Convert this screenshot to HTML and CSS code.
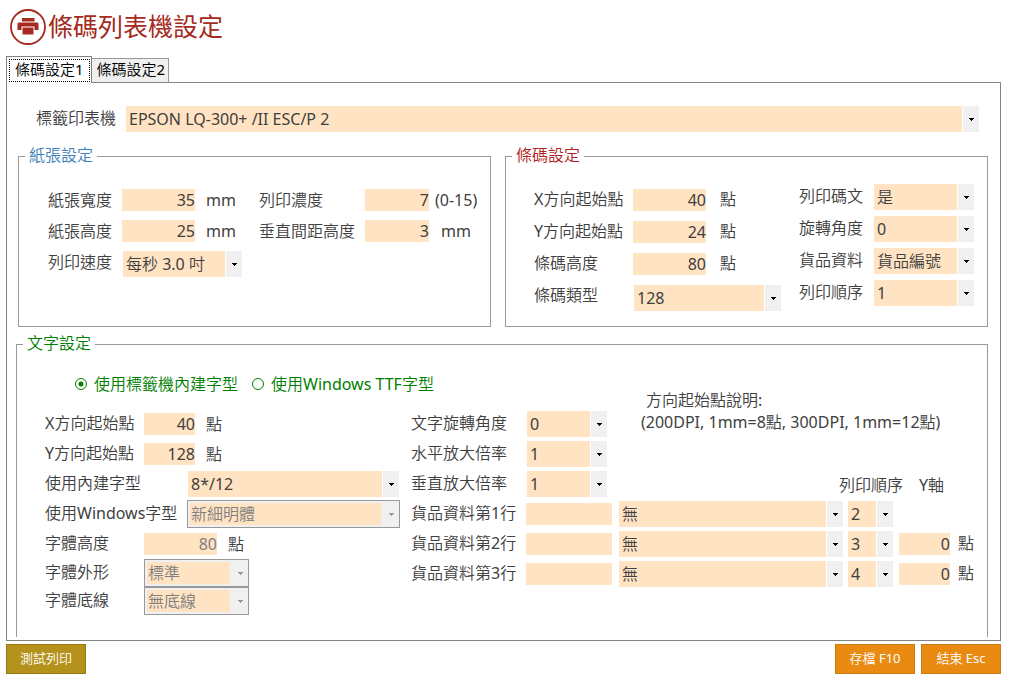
FILE: index.html
```html
<!DOCTYPE html>
<html lang="zh-Hant">
<head>
<meta charset="utf-8">
<title>條碼列表機設定</title>
<link rel="stylesheet" href="styles.css">
</head>
<body>
<header class="header">
  <svg class="logo" viewBox="0 0 36 36" aria-hidden="true">
    <circle cx="18" cy="18" r="17" fill="none" stroke="#a52a20" stroke-width="1.8"/>
    <rect x="12" y="9" width="12.500" height="3.500" fill="#a52a20"/>
    <path d="M8.500 13.500h19l1 1V21h-4v-3.500H11.500V21h-4v-6.500z" fill="#a52a20"/>
    <path d="M12.500 18.500h11v7h-11z" fill="#a52a20"/>
  </svg>
  <h1 class="title">條碼列表機設定</h1>
</header>

<div class="tabs" role="tablist">
  <button class="tab active" role="tab" aria-selected="true" type="button"><span class="tab-text">條碼設定1</span></button>
  <button class="tab" role="tab" aria-selected="false" type="button">條碼設定2</button>
</div>

<main class="panel">
  <div class="printer">
    <label for="printer">標籤印表機</label>
    <select id="printer" class="select"><option>EPSON LQ-300+ /II ESC/P 2</option></select>
  </div>

  <div class="groups">
    <fieldset class="group paper">
      <legend class="legend">紙張設定</legend>
      <div class="paper-grid">
        <label for="pw">紙張寬度</label><input id="pw" class="num" value="35"><span>mm</span>
        <label for="density">列印濃度</label><input id="density" class="num narrow" value="7"><span>(0-15)</span>
        <label for="ph">紙張高度</label><input id="ph" class="num" value="25"><span>mm</span>
        <label for="vgap">垂直間距高度</label><input id="vgap" class="num narrow" value="3"><span class="unit">mm</span>
        <label for="speed">列印速度</label>
        <select id="speed" class="select speed"><option>每秒 3.0 吋</option></select>
      </div>
    </fieldset>

    <fieldset class="group barcode">
      <legend class="legend">條碼設定</legend>
      <div class="barcode-cols">
        <div class="origin-grid">
          <label for="bx">X方向起始點</label><input id="bx" class="num" value="40"><span>點</span>
          <label for="by">Y方向起始點</label><input id="by" class="num" value="24"><span>點</span>
          <label for="bh">條碼高度</label><input id="bh" class="num" value="80"><span>點</span>
          <label for="btype">條碼類型</label>
          <select id="btype" class="select type"><option>128</option></select>
        </div>
        <div class="option-grid">
          <label for="ptext">列印碼文</label><select id="ptext" class="select"><option>是</option></select>
          <label for="rot">旋轉角度</label><select id="rot" class="select"><option>0</option></select>
          <label for="item">貨品資料</label><select id="item" class="select"><option>貨品編號</option></select>
          <label for="order1">列印順序</label><select id="order1" class="select"><option>1</option></select>
        </div>
      </div>
    </fieldset>
  </div>

  <fieldset class="group text">
    <legend class="legend">文字設定</legend>
    <div class="radios">
      <label class="radio-label"><input class="radio" type="radio" name="font" checked>使用標籤機內建字型</label>
      <label class="radio-label"><input class="radio" type="radio" name="font">使用Windows TTF字型</label>
    </div>
    <div class="text-cols">
      <div class="font-rows">
        <div class="row"><label for="tx">X方向起始點</label><input id="tx" class="num short" value="40"><span>點</span></div>
        <div class="row"><label for="ty">Y方向起始點</label><input id="ty" class="num short" value="128"><span>點</span></div>
        <div class="row wide"><label for="builtin">使用內建字型</label><select id="builtin" class="select"><option>8*/12</option></select></div>
        <div class="row wide"><label for="winfont">使用Windows字型</label><select id="winfont" class="select" disabled><option>新細明體</option></select></div>
        <div class="row"><label for="fh">字體高度</label><input id="fh" class="num" value="80" disabled><span>點</span></div>
        <div class="row"><label for="shape">字體外形</label><select id="shape" class="select style" disabled><option>標準</option></select></div>
        <div class="row"><label for="underline">字體底線</label><select id="underline" class="select style" disabled><option>無底線</option></select></div>
      </div>
      <div class="data">
        <div class="data-top">
          <div class="scale-grid">
            <label for="trot">文字旋轉角度</label><select id="trot" class="select"><option>0</option></select>
            <label for="hs">水平放大倍率</label><select id="hs" class="select"><option>1</option></select>
            <label for="vs">垂直放大倍率</label><select id="vs" class="select"><option>1</option></select>
          </div>
          <div class="aside">
            <p class="note"><span class="note-title">方向起始點說明:</span>(200DPI, 1mm=8點, 300DPI, 1mm=12點)</p>
            <div class="heads"><span>列印順序</span><span>Y軸</span></div>
          </div>
        </div>
        <div class="line-grid">
          <label for="l1">貨品資料第1行</label><input id="l1" class="num"><select class="select" aria-label="第1行欄位"><option>無</option></select><select class="select" aria-label="第1行列印順序"><option>2</option></select>
          <label class="next" for="l2">貨品資料第2行</label><input id="l2" class="num"><select class="select" aria-label="第2行欄位"><option>無</option></select><select class="select" aria-label="第2行列印順序"><option>3</option></select><input id="y2" class="num" value="0"><label for="y2">點</label>
          <label for="l3">貨品資料第3行</label><input id="l3" class="num"><select class="select" aria-label="第3行欄位"><option>無</option></select><select class="select" aria-label="第3行列印順序"><option>4</option></select><input id="y3" class="num" value="0"><label for="y3">點</label>
        </div>
      </div>
    </div>
  </fieldset>
</main>

<footer class="footer">
  <button class="btn test" type="button">測試列印</button>
  <button class="btn" type="button">存檔 F10</button>
  <button class="btn" type="button">結束 Esc</button>
</footer>
</body>
</html>
```
FILE: styles.css
```css
* { box-sizing: border-box; }

body {
  margin: 0;
  padding: 9px 9px 6px 6px;
  background: #fff;
  color: #404040;
  font: 400 16px/22px "Noto Sans", "Noto Sans CJK TC DemiLight", "Noto Sans CJK TC", sans-serif;
  white-space: nowrap;
}

input, select, button { font: inherit; color: inherit; margin: 0; border: 0; border-radius: 0; }

/* Header and tabs */
.header { display: flex; align-items: center; gap: 2px; height: 36px; padding-left: 4px; color: #a52a20; }
.logo { width: 36px; height: 36px; flex: none; }
.title { margin: 0; padding-bottom: 2px; font: 400 25px/34px "Noto Sans", "Noto Sans CJK TC", sans-serif; }

.tabs { display: flex; align-items: flex-end; margin-top: 11px; }
.tab {
  height: 24px;
  padding: 0 3px 2px 5px;
  border: 1px solid #999;
  border-width: 1px 1px 0 0;
  background: #f0f0f0;
  color: #000;
  font-size: 15px;
  line-height: 21px;
}
.tab.active {
  z-index: 1;
  height: 27px;
  margin-bottom: -1px;
  padding: 2px 1px 1px 2px;
  border-color: #838383;
  border-left-width: 1px;
  background: #fff;
}
.tab-text { display: block; padding: 0 5px 2px; border: 1px dotted #000; line-height: 19px; }

/* Panel */
.panel { padding: 23px 12px 3px 9px; border: 1px solid #838383; }
.printer { display: flex; align-items: center; padding: 0 9px 0 20px; }
.printer label { width: 90px; padding-bottom: 2px; }
.printer .select { flex: 1; }

.groups { display: flex; gap: 14px; margin: 13px 0 6px 2px; }
.group { margin: 0; padding: 0; border: 1px solid #999; min-width: 0; }
.legend { margin-left: 6px; padding: 0 4px 2px; line-height: 20px; }
.paper { flex: 473 1 0; height: 182px; }
.barcode { flex: 483 1 0; height: 182px; }
.text { border-bottom: 0; }
.paper .legend { color: #3d7fb8; }
.barcode .legend { color: #b02222; }
.text .legend { color: #008000; }

/* Fields */
.num { width: 73px; height: 22px; padding: 0; background: #ffe3c3; text-align: right; min-width: 0; }
.num:disabled { color: #808080; }
.select {
  --arrow: #000;
  height: 26px;
  width: 100px;
  min-width: 0;
  padding: 0 18px 0 3px;
  appearance: none;
  background:
    linear-gradient(var(--arrow), var(--arrow)) right 5px top 12px / 5px 1px no-repeat,
    linear-gradient(var(--arrow), var(--arrow)) right 6px top 13px / 3px 1px no-repeat,
    linear-gradient(var(--arrow), var(--arrow)) right 7px top 14px / 1px 1px no-repeat,
    linear-gradient(#f0f0f0, #f0f0f0) right / 16px 100% no-repeat,
    linear-gradient(#fff, #fff) right / 17px 100% no-repeat,
    #ffe3c3;
}
.select:disabled {
  --arrow: #999;
  height: 28px;
  padding-left: 3px;
  border: 1px solid #999;
  box-shadow: inset 0 0 0 2px #f0f0f0;
  color: #808080;
  opacity: 1;
  background:
    linear-gradient(var(--arrow), var(--arrow)) right 5px top 12px / 5px 1px no-repeat,
    linear-gradient(var(--arrow), var(--arrow)) right 6px top 13px / 3px 1px no-repeat,
    linear-gradient(var(--arrow), var(--arrow)) right 7px top 14px / 1px 1px no-repeat,
    linear-gradient(#f0f0f0, #f0f0f0) right / 18px 100% no-repeat,
    #ffe3c3;
}

.paper-grid {
  display: grid;
  grid-template-columns: 74px 84px 53px 106px 70px auto;
  row-gap: 9px;
  align-items: start;
  padding: 22px 0 0 29px;
}
.narrow { width: 64px; }
.unit { padding-left: 6px; }
.speed { grid-column: span 3; width: 119px; margin-left: 1px; }

.barcode-cols { display: flex; justify-content: space-between; align-items: flex-start; padding: 17px 13px 0 28px; }
.origin-grid { display: grid; grid-template-columns: 99px 87px auto; row-gap: 10px; align-items: start; padding-top: 5px; line-height: 20px; }
.type { grid-column: span 2; width: 147px; margin-left: 1px; }
.option-grid { display: grid; grid-template-columns: 75px 100px; row-gap: 6px; line-height: 24px; align-items: start; }

/* Text settings */
.radios { display: flex; gap: 14px; padding: 18px 0 14px 58px; color: #008000; }
.radio-label { display: flex; align-items: center; gap: 7px; }
.radio {
  appearance: none;
  width: 12px;
  height: 12px;
  border: 1px solid #008000;
  border-radius: 50%;
}
.radio:checked { background: radial-gradient(circle, #008000 2px, transparent 3px); }

.text-cols { display: flex; padding: 0 13px 22px 28px; }
.font-rows { display: grid; grid-template-rows: repeat(5, 30px) 28px 28px; width: 366px; flex: none; }
.row { display: flex; align-items: center; }
.row label { width: 99px; padding-bottom: 2px; }
.row span { margin-left: 11px; }
.short { width: 51px; }
.row.wide label { width: 142px; }
.wide .select { width: 213px; }
.wide .select:enabled { width: 211px; margin-left: 1px; }
.row .style { width: 105px; }

.data { flex: 1; min-width: 0; }
.data label { padding-bottom: 2px; }
.data-top { display: flex; height: 90px; }
.scale-grid { display: grid; grid-template-columns: 116px 80px; grid-auto-rows: 30px; align-items: center; }
.scale-grid .select { width: 80px; }
.aside { flex: 1; display: flex; flex-direction: column; justify-content: space-between; padding-left: 34px; }
.note { margin: -20px 0 0; }
.note-title { display: block; padding-left: 5px; }
.heads { display: flex; justify-content: flex-end; gap: 16px; padding: 0 30px 3px 0; }
.line-grid {
  display: grid;
  grid-template-columns: 115px 86px 1fr 50px 57px 24px;
  grid-auto-rows: 30px;
  align-items: center;
}
.line-grid .num, .line-grid .select { width: auto; }
.line-grid .select { margin-left: 7px; }
.line-grid .select + .select { margin-left: 5px; }
.line-grid .select + .num { margin-left: 6px; }
.line-grid .num + label { padding-left: 8px; }
.line-grid .next { grid-column: 1; }

/* Footer */
.footer { display: flex; gap: 6px; margin-top: 3px; }
.btn {
  width: 80px;
  height: 30px;
  padding: 0 0 2px;
  border: 1px solid #c97a10;
  background: #e98b12;
  color: #fff;
  font-size: 13px;
}
.test { margin-right: auto; border-color: #957812; background: #b5921b; }
```
